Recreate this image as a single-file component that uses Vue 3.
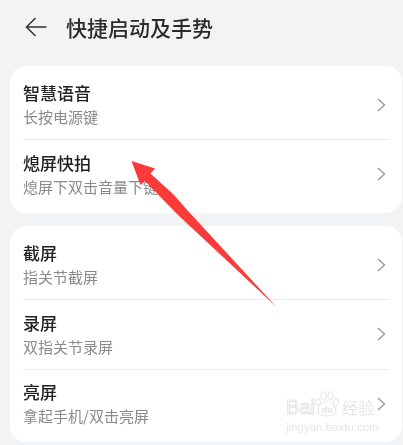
<script setup>
const groups = [
  [
    { title: '智慧语音', sub: '长按电源键' },
    { title: '熄屏快拍', sub: '熄屏下双击音量下键' },
  ],
  [
    { title: '截屏', sub: '指关节截屏' },
    { title: '录屏', sub: '双指关节录屏' },
    { title: '亮屏', sub: '拿起手机/双击亮屏' },
  ],
]
</script>

<template>
  <div class="page">
    <header class="header">
      <svg class="back" width="22" height="20" viewBox="0 0 22 20" fill="none">
        <path d="M21.5 10H1.5M10.5 1 1.5 10l9 9" stroke="#333" stroke-width="1.5" />
      </svg>
      <h1 class="title">快捷启动及手势</h1>
    </header>

    <section v-for="(group, g) in groups" :key="g" class="card">
      <div v-for="item in group" :key="item.title" class="row">
        <div class="text">
          <div class="name">{{ item.title }}</div>
          <div class="sub">{{ item.sub }}</div>
        </div>
        <svg class="chev" width="9" height="14" viewBox="0 0 9 14" fill="none">
          <path d="M1 1 7.5 7 1 13" stroke="#999" stroke-width="1.4" />
        </svg>
      </div>
    </section>

    <svg class="arrow" width="403" height="445" viewBox="0 0 403 445">
      <path d="M131.5 161 155 168.5 150.5 173.5 173 194 189 212 276.5 307 177 214 145 181 140.5 185Z" fill="#fb3a3a" />
    </svg>

    <div class="mark">
      <div class="mark-top">
        <span class="mark-bai">Bai</span>
        <svg class="paw" width="28" height="28" viewBox="0 0 28 28" fill="#fff" stroke="#e4e4e4" stroke-width="1">
          <ellipse cx="5" cy="12" rx="2.6" ry="3.4" />
          <ellipse cx="10.5" cy="5.5" rx="2.8" ry="3.8" />
          <ellipse cx="17.5" cy="5.5" rx="2.8" ry="3.8" />
          <ellipse cx="23" cy="12" rx="2.6" ry="3.4" />
          <path d="M14 11c4 0 9 6 9 10 0 4-4 5-9 5s-9-1-9-5c0-4 5-10 9-10Z" />
          <text x="14" y="23" text-anchor="middle" class="paw-du">du</text>
        </svg>
        <span class="mark-cn">经验</span>
      </div>
      <div class="mark-url">jingyan.baidu.com</div>
    </div>
  </div>
</template>

<style scoped>
.page {
  position: relative;
  width: 403px;
  height: 445px;
  overflow: hidden;
  background: #f1f3f5;
  font-family: "Noto Sans CJK SC", "Noto Sans", sans-serif;
  filter: blur(0.45px);
}
.header {
  display: flex;
  align-items: center;
  gap: 19px;
  height: 66px;
  padding: 0 0 12px 25px;
  box-sizing: border-box;
}
.back { flex: none; }
.title {
  margin: 0;
  font-size: 21px;
  font-weight: 500;
  line-height: 30px;
  color: #2b2b2b;
}
.card {
  margin: 0 1px 13.4px 10px;
  padding: 4px 13px;
  background: #fff;
  border-radius: 16px;
}
.row {
  display: flex;
  align-items: center;
  justify-content: space-between;
  height: 69.3px;
  padding-right: 3px;
  box-sizing: border-box;
}
.row + .row { border-top: 1px solid #ebecee; }
.name {
  font-size: 17px;
  font-weight: 500;
  line-height: 24px;
  color: #222;
}
.sub {
  font-size: 15px;
  line-height: 22px;
  margin-top: 1px;
  color: #8a8a8a;
}
.chev { flex: none; }
.arrow {
  position: absolute;
  top: 0;
  left: 0;
}
.mark {
  position: absolute;
  left: 286px;
  top: 390px;
  width: 90px;
  color: #e6e6e6;
}
.mark-top {
  display: flex;
  align-items: center;
  height: 28px;
}
.mark-bai {
  font-family: "Liberation Sans", sans-serif;
  font-size: 20px;
  line-height: 22px;
  margin-top: 6px;
  color: #fff;
  -webkit-text-stroke: 1px #e4e4e4;
}
.paw {
  flex: none;
  margin-left: -2px;
}
.paw-du {
  font-family: "Liberation Sans", sans-serif;
  font-size: 9px;
  font-weight: 700;
  fill: #e4e4e4;
  stroke: none;
}
.mark-cn {
  font-size: 16px;
  line-height: 22px;
  margin-top: 6px;
  margin-left: 1px;
}
.mark-url {
  font-family: "Liberation Sans", sans-serif;
  font-size: 11.5px;
  line-height: 14px;
  margin-top: 2px;
  white-space: nowrap;
}
</style>
